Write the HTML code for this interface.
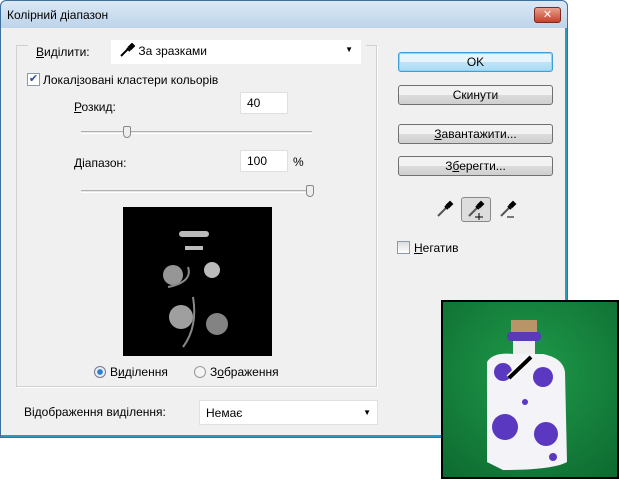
<!DOCTYPE html>
<html><head><meta charset="utf-8"><style>
*{margin:0;padding:0;box-sizing:border-box}
body{width:619px;height:479px;background:#fff;position:relative;overflow:hidden;font-family:"Liberation Sans","DejaVu Sans",sans-serif;font-size:12px;color:#000}
.dlg{position:absolute;left:0;top:0;width:568px;height:438px;background:#b9d1ea;border:1px solid #3f6f9c;border-radius:6px 6px 0 0}
.title{position:absolute;left:0;top:0;width:566px;height:28px;background:linear-gradient(#dbe8f5,#bcd3ea);border-radius:6px 6px 0 0}
.title span{position:absolute;left:6px;top:7px;font-size:12px}
.close{position:absolute;left:533px;top:6px;width:27px;height:16px;background:linear-gradient(#e8a08c,#c7402a);border:1px solid #7a2a1e;border-radius:3px;color:#fff;font-weight:bold;text-align:center;font-size:11px;line-height:14px}
.client{position:absolute;background:#f0f0f0}
.a{position:absolute}
.grp{position:absolute;left:16px;top:45px;width:361px;height:342px;border:1px solid #d0d0d0;box-shadow:1px 1px 0 #fff}
.btn{position:absolute;left:398px;width:155px;height:20px;border:1px solid #707070;border-radius:3px;background:linear-gradient(#f2f2f2 50%,#dcdcdc 50%,#cfcfcf);text-align:center;line-height:18px}
.inp{position:absolute;background:#fff;border:1px solid #e0e0e0;height:22px;padding:3px 6px}
.track{position:absolute;height:3px;border-top:1px solid #b0b0b0;border-bottom:1px solid #fff;background:#e8e8e8}
.thumb{position:absolute;width:8px;height:12px;border:1px solid #888;border-radius:2px 2px 4px 4px;background:#eee}
u{text-decoration:underline}
</style></head><body>
<div class="dlg"><div class="title"><span>Колірний діапазон</span></div><div class="close">✕</div></div>
<div class="client" style="left:1px;width:566px;top:28px;height:409px;border-bottom:2px solid #2a9ac0;border-right:2px solid #2a9ac0"></div>
<div class="grp"></div>
<div class="a" style="left:28px;top:40px;width:338px;height:24px;background:#f0f0f0"></div>
<div class="a" style="left:36px;top:45px"><u>В</u>иділити:</div>
<div class="inp" style="left:111px;top:40px;width:250px;height:24px;border:none;padding-left:8px"><svg width="16" height="14" style="vertical-align:-2px"><path d="M2 13 L9 6 M8 5 L11 8 M10 4 L13 1 L15 3 L12 6 Z" stroke="#000" stroke-width="2" fill="#000"/></svg> За зразками<span style="position:absolute;right:8px;top:5px;font-size:8px">▼</span></div>
<div class="a" style="left:27px;top:73px;width:13px;height:13px;border:1px solid #8a9bb0;background:#fff;color:#2c4a9a;font-size:11px;line-height:11px;text-align:center">✔</div>
<div class="a" style="left:43px;top:73px">Локал<u>і</u>зовані кластери кольорів</div>
<div class="a" style="left:74px;top:100px"><u>Р</u>озкид:</div>
<div class="inp" style="left:240px;top:92px;width:48px">40</div>
<div class="track" style="left:81px;top:131px;width:231px"></div>
<div class="thumb" style="left:123px;top:126px"></div>
<div class="a" style="left:74px;top:156px"><u>Д</u>іапазон:</div>
<div class="inp" style="left:240px;top:150px;width:48px">100</div>
<div class="a" style="left:293px;top:155px">%</div>
<div class="track" style="left:81px;top:190px;width:231px"></div>
<div class="thumb" style="left:306px;top:185px"></div>
<div class="a" style="left:123px;top:207px;width:149px;height:149px;background:#000">
<svg width="149" height="149"><g fill="#bbb"><rect x="56" y="24" width="30" height="6" rx="3"/><rect x="62" y="39" width="18" height="4"/><circle cx="50" cy="68" r="10" opacity=".8"/><circle cx="89" cy="63" r="8"/><circle cx="58" cy="110" r="12" opacity=".85"/><circle cx="94" cy="117" r="11" opacity=".7"/><path d="M45 80 Q70 75 65 60 M70 90 Q75 120 60 140" stroke="#888" fill="none" stroke-width="2"/></g></svg></div>
<div class="a" style="left:94px;top:366px;width:12px;height:12px;border-radius:50%;border:1px solid #778;background:radial-gradient(#2a7fd0 35%,#e8f0f8 45%)"></div>
<div class="a" style="left:110px;top:365px">В<u>и</u>ділення</div>
<div class="a" style="left:194px;top:366px;width:12px;height:12px;border-radius:50%;border:1px solid #999;background:#f4f4f4"></div>
<div class="a" style="left:210px;top:365px">З<u>о</u>браження</div>
<div class="a" style="left:24px;top:405px">Відображення виділення:</div>
<div class="inp" style="left:199px;top:400px;width:179px;height:25px;padding-top:5px">Немає<span style="position:absolute;right:6px;top:7px;font-size:8px">▼</span></div>
<div class="btn" style="top:52px;border-color:#3c9fd5;background:linear-gradient(#e6f5fc 50%,#bfe4f8 50%,#a8daf4);box-shadow:inset 0 0 0 1px #8fd3f5">OK</div>
<div class="btn" style="top:85px">Скинути</div>
<div class="btn" style="top:124px"><u>З</u>авантажити...</div>
<div class="btn" style="top:156px">З<u>б</u>ерегти...</div>
<svg class="a" style="left:436px;top:200px" width="18" height="18"><path d="M2 16 L10 8" stroke="#555" stroke-width="2"/><path d="M9 6 L12 9 M11 5 L14 2 L16 4 L13 7 Z" stroke="#000" stroke-width="2" fill="#000"/></svg>
<div class="a" style="left:461px;top:197px;width:30px;height:25px;border:1px solid #888;border-radius:3px;background:#ddd"></div>
<svg class="a" style="left:467px;top:200px" width="20" height="20"><path d="M2 16 L10 8" stroke="#555" stroke-width="2"/><path d="M9 6 L12 9 M11 5 L14 2 L16 4 L13 7 Z" stroke="#000" stroke-width="2" fill="#000"/><path d="M8 17 H16 M12 13 V20" stroke="#000"/></svg>
<svg class="a" style="left:499px;top:200px" width="20" height="20"><path d="M2 16 L10 8" stroke="#555" stroke-width="2"/><path d="M9 6 L12 9 M11 5 L14 2 L16 4 L13 7 Z" stroke="#000" stroke-width="2" fill="#000"/><path d="M8 17 H15" stroke="#000"/></svg>
<div class="a" style="left:397px;top:241px;width:13px;height:13px;border:1px solid #8a9bb0;background:linear-gradient(#ddd,#fff)"></div>
<div class="a" style="left:414px;top:241px"><u>Н</u>егатив</div>
<div class="a" style="left:441px;top:300px;width:178px;height:179px;border:2px solid #000;background:radial-gradient(circle at 50% 40%,#1f9a4a,#0d6a30)">
<svg width="174" height="175"><rect x="68" y="18" width="26" height="16" fill="#b89468"/><rect x="64" y="30" width="34" height="9" rx="4" fill="#5a3ab8"/><rect x="70" y="39" width="22" height="14" fill="#eee"/><path d="M44 60 Q50 50 70 52 L100 52 Q120 56 122 70 L124 160 Q110 168 60 168 L44 160 Z" fill="#f4f4f8"/><g fill="#5a38c0"><circle cx="60" cy="70" r="9"/><circle cx="100" cy="75" r="10"/><circle cx="62" cy="125" r="13"/><circle cx="103" cy="132" r="12"/><circle cx="82" cy="100" r="3"/><circle cx="110" cy="155" r="4"/></g><path d="M66 76 L88 55" stroke="#fff" stroke-width="7"/><path d="M66 76 L88 55" stroke="#000" stroke-width="4"/></svg></div>
</body></html>
